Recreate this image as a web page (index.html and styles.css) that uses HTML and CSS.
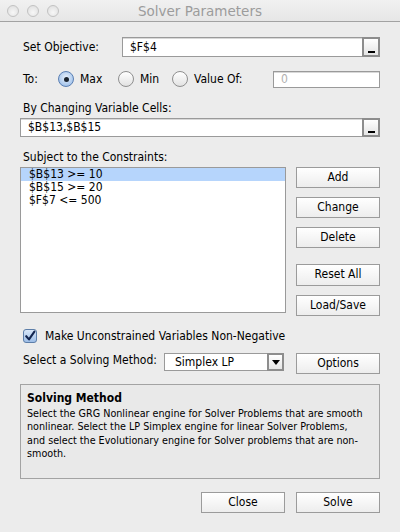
FILE: index.html
```html
<!DOCTYPE html>
<html>
<head>
<meta charset="utf-8">
<title>Solver Parameters</title>
<link rel="stylesheet" href="styles.css">
</head>
<body>
<div class="window">
  <div class="titlebar">
    <div class="lights">
      <span class="light"></span><span class="light"></span><span class="light"></span>
    </div>
    <div class="title">Solver Parameters</div>
    <div></div>
  </div>

  <div class="main">
    <div class="row row-obj">
      <div class="lbl lbl-obj">Set Objective:</div>
      <div class="field field-obj">
        <div class="field-text">$F$4</div>
        <div class="ref-btn"><span class="ref-bar"></span></div>
      </div>
    </div>

    <div class="row row-to">
      <div class="lbl lbl-to">To:</div>
      <div class="opt opt-max"><span class="radio on"><span class="dot"></span></span><span>Max</span></div>
      <div class="opt opt-min"><span class="radio"></span><span>Min</span></div>
      <div class="opt opt-val"><span class="radio"></span><span>Value Of:</span></div>
      <div class="field field-val"><div class="field-text muted">0</div></div>
    </div>

    <div class="lbl sec-lbl sec-vars">By Changing Variable Cells:</div>
    <div class="field field-vars">
      <div class="field-text">$B$13,$B$15</div>
      <div class="ref-btn"><span class="ref-bar"></span></div>
    </div>

    <div class="lbl sec-lbl sec-cons">Subject to the Constraints:</div>
    <div class="cons">
      <div class="list">
        <div class="item sel">$B$13 &gt;= 10</div>
        <div class="item">$B$15 &gt;= 20</div>
        <div class="item">$F$7 &lt;= 500</div>
      </div>
      <div class="btn-col">
        <div class="btn">Add</div>
        <div class="btn">Change</div>
        <div class="btn">Delete</div>
        <div class="btn btn-reset">Reset All</div>
        <div class="btn">Load/Save</div>
      </div>
    </div>

    <div class="row row-check">
      <span class="check">
        <svg width="12" height="12" viewBox="0 0 12 12"><path d="M2.2 6.2 L5 9.4 L10.4 1.6" fill="none" stroke="#12254f" stroke-width="2.1" stroke-linecap="round" stroke-linejoin="round"/></svg>
      </span>
      <span>Make Unconstrained Variables Non-Negative</span>
    </div>

    <div class="row row-method">
      <div class="lbl lbl-method">Select a Solving Method:</div>
      <div class="select">
        <div class="select-text">Simplex LP</div>
        <div class="select-arrow"><span class="tri"></span></div>
      </div>
      <div class="btn btn-options">Options</div>
    </div>

    <div class="desc">
      <div class="desc-title">Solving Method</div>
      <div class="desc-body">Select the GRG Nonlinear engine for Solver Problems that are smooth nonlinear. Select the LP Simplex engine for linear Solver Problems, and select the Evolutionary engine for Solver problems that are non-smooth.</div>
    </div>

    <div class="footer">
      <div class="btn">Close</div>
      <div class="btn">Solve</div>
    </div>
  </div>
</div>
</body>
</html>
```

FILE: styles.css
```css
html, body {
  margin: 0;
  padding: 0;
}
body {
  width: 400px;
  height: 532px;
  overflow: hidden;
  background: #ececec;
  font-family: "DejaVu Sans Condensed", "DejaVu Sans", sans-serif;
  font-size: 12px;
  color: #000;
}
.window {
  width: 400px;
  height: 532px;
  box-sizing: border-box;
  background: #ececec;
}
.titlebar {
  height: 21px;
  border-bottom: 1px solid #a2a2a2;
  background: linear-gradient(#f1f1f1, #e6e6e6);
  display: grid;
  grid-template-columns: 1fr auto 1fr;
  align-items: center;
}
.lights {
  display: flex;
  gap: 8px;
  padding-left: 7px;
}
.light {
  width: 12px;
  height: 12px;
  box-sizing: border-box;
  border-radius: 50%;
  border: 1px solid #c2c2c2;
  background: radial-gradient(circle at 50% 65%, #f7f7f7, #dcdcdc);
}
.title {
  color: #9c9c9c;
  font-family: "DejaVu Sans", sans-serif;
  font-size: 13.5px;
  padding-top: 1px;
}
.main {
  padding: 0 20px;
}
.row {
  display: flex;
  align-items: center;
}
.lbl {
  padding-left: 3px;
  white-space: nowrap;
}
.row-obj {
  margin-top: 15px;
  height: 20px;
}
.lbl-obj {
  width: 99px;
}
.field {
  display: flex;
  box-sizing: border-box;
  background: #fff;
  border: 1px solid #9a9a9a;
  box-shadow: inset 0 1px 0 #d8d8d8;
}
.field-obj {
  flex: 1;
  height: 20px;
}
.field-text {
  flex: 1;
  padding-left: 7px;
  line-height: 18px;
  white-space: nowrap;
}
.ref-btn {
  width: 18px;
  box-sizing: border-box;
  border: 2px solid #8d8d8d;
  margin: -1px -1px -1px 0;
  background: linear-gradient(#ffffff, #e4e4e4);
  display: flex;
  justify-content: center;
  align-items: flex-end;
  padding-bottom: 2px;
}
.ref-bar {
  width: 7px;
  height: 2px;
  background: #000;
}
.row-to {
  margin-top: 13px;
  height: 18px;
}
.lbl-to {
  width: 35px;
}
.opt {
  display: flex;
  align-items: center;
  gap: 6px;
}
.opt-max { width: 60px; }
.opt-min { width: 54px; }
.opt-val { width: 101px; }
.radio {
  width: 16px;
  height: 16px;
  box-sizing: border-box;
  border-radius: 50%;
  border: 1px solid #8f8f8f;
  background: linear-gradient(#ffffff, #e2e2e2);
  display: flex;
  align-items: center;
  justify-content: center;
  flex: none;
}
.radio.on {
  border-color: #5a7fb3;
  background: radial-gradient(circle at 50% 40%, #e8f1fc, #a9c7ec 70%, #86abd9);
}
.dot {
  width: 5px;
  height: 5px;
  border-radius: 50%;
  background: #1b2430;
}
.field-val {
  flex: 1;
  height: 17px;
}
.field-val .field-text {
  line-height: 15px;
}
.muted {
  color: #b0b0b0;
}
.sec-lbl {
  height: 14px;
  line-height: 14px;
}
.sec-vars {
  margin-top: 13px;
}
.field-vars {
  margin-top: 3px;
  height: 19px;
}
.field-vars .field-text {
  line-height: 17px;
}
.sec-cons {
  margin-top: 13px;
}
.cons {
  margin-top: 3px;
  display: flex;
  align-items: flex-start;
  gap: 10px;
}
.list {
  width: 266px;
  height: 146px;
  box-sizing: border-box;
  border: 1px solid #9a9a9a;
  background: #fff;
}
.item {
  height: 13px;
  line-height: 13px;
  padding-left: 8px;
  white-space: nowrap;
}
.item.sel {
  background: #b6d5fc;
}
.btn-col {
  flex: 1;
  display: flex;
  flex-direction: column;
  gap: 9px;
}
.btn {
  height: 21px;
  box-sizing: border-box;
  border: 1px solid #9b9b9b;
  background: linear-gradient(#ffffff, #ededed);
  text-align: center;
  line-height: 19px;
  white-space: nowrap;
}
.btn-reset {
  margin-top: 7px;
  height: 22px;
}
.row-check {
  margin-top: 13px;
  height: 14px;
  padding-left: 3px;
  gap: 8px;
}
.check {
  width: 14px;
  height: 14px;
  box-sizing: border-box;
  border: 1px solid #5d7ea9;
  border-radius: 3px;
  background: linear-gradient(#d9e7f8, #9dbde6);
  display: flex;
  align-items: center;
  justify-content: center;
}
.row-method {
  margin-top: 10px;
  height: 21px;
  align-items: flex-start;
}
.lbl-method {
  width: 141px;
  line-height: 14px;
}
.select {
  width: 120px;
  height: 18px;
  box-sizing: border-box;
  border: 1px solid #9a9a9a;
  background: #fff;
  display: flex;
}
.select-text {
  flex: 1;
  padding-left: 10px;
  line-height: 16px;
}
.select-arrow {
  width: 17px;
  box-sizing: border-box;
  margin: -1px -1px -1px 0;
  border: 2px solid #8d8d8d;
  background: linear-gradient(#ffffff, #e6e6e6);
  display: flex;
  align-items: center;
  justify-content: center;
}
.tri {
  width: 0;
  height: 0;
  border-left: 4px solid transparent;
  border-right: 4px solid transparent;
  border-top: 5px solid #000;
}
.btn-options {
  margin-left: auto;
  width: 84px;
}
.desc {
  margin-top: 10px;
  height: 95px;
  box-sizing: border-box;
  border: 1px solid #a3a3a3;
  background: #e9e9e9;
  padding: 6px 3px 0 6px;
}
.desc-title {
  font-weight: bold;
  line-height: 14px;
}
.desc-body {
  width: 339px;
  margin-top: 2px;
  font-size: 10.7px;
  line-height: 13.3px;
}
.footer {
  margin-top: 13px;
  display: flex;
  justify-content: flex-end;
  gap: 11px;
}
.footer .btn {
  width: 84px;
}
```
